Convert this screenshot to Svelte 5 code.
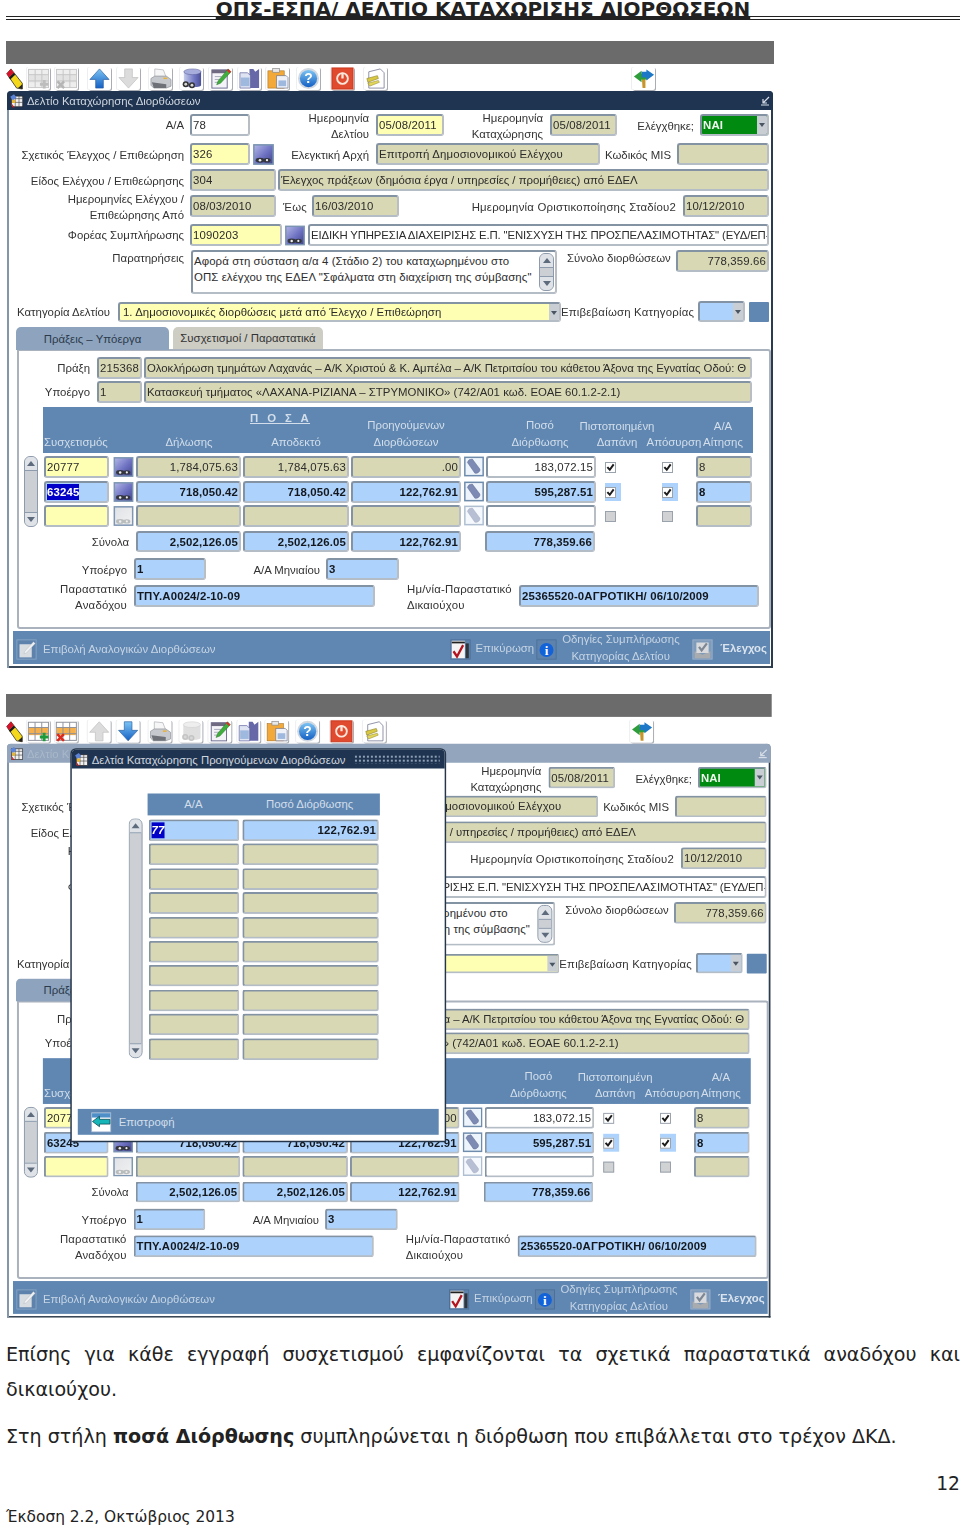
<script>
  // coordinates below are read off the first screenshot, so the helpers shift them to the canvas origin
  const OX = 7;
  const OY = 110;

  const at = (x1, y1, x2, y2) =>
    `left:${x1 - OX}px;top:${y1 - OY}px;width:${x2 - x1}px;height:${y2 - y1}px;`;
  const labelAt = (l) => {
    const left = l.a === "r" ? l.x - 300 : l.a === "c" ? l.x - 150 : l.x;
    return `left:${left - OX}px;top:${l.y - 8 - OY}px;`;
  };

  const f = (x1, y1, x2, y2, c, t = "", o = {}) => ({ x1, y1, x2, y2, c, t, ...o });
  const lb = (x, y, t, a = "r", wide = false) => ({ x, y, t, a, wide });

  const fields = [
    f(190, 114, 250, 136, "white", "78"),
    f(376, 114, 444, 136, "yel", "05/08/2011"),
    f(550, 114, 617, 136, "kha", "05/08/2011"),
    f(190, 143, 250, 165, "yel", "326"),
    f(376, 143, 600, 165, "kha", "Επιτροπή Δημοσιονομικού Ελέγχου"),
    f(677, 143, 769, 165, "kha"),
    f(190, 169, 276, 191, "kha", "304"),
    f(278, 169, 769, 191, "kha", "Έλεγχος πράξεων (δημόσια έργα / υπηρεσίες / προμήθειες) από ΕΔΕΛ", { ls: -0.02 }),
    f(190, 195, 276, 217, "kha", "08/03/2010"),
    f(312, 195, 399, 217, "kha", "16/03/2010"),
    f(683, 195, 769, 217, "kha", "10/12/2010"),
    f(190, 224, 282, 246, "yel", "1090203"),
    f(308, 224, 769, 246, "white", 'ΕΙΔΙΚΗ ΥΠΗΡΕΣΙΑ ΔΙΑΧΕΙΡΙΣΗΣ Ε.Π. "ΕΝΙΣΧΥΣΗ ΤΗΣ ΠΡΟΣΠΕΛΑΣΙΜΟΤΗΤΑΣ" (ΕΥΔ/ΕΠ-', { ls: -0.15 }),
    f(676, 250, 769, 272, "kha", "778,359.66", { right: true }),
    f(118, 302, 561, 322, "yel", "1. Δημοσιονομικές διορθώσεις μετά από Έλεγχο / Επιθεώρηση", { drop: true, pad: true, ls: 0.03 }),
    f(698, 301, 745, 322, "blue", "", { drop: true }),
    f(97, 357, 142, 379, "kha", "215368"),
    f(144, 357, 752, 379, "kha", "Ολοκλήρωση τμημάτων Λαχανάς – Α/Κ Χριστού & Κ. Αμπέλα – Α/Κ Πετριτσίου του κάθετου Άξονα της Εγνατίας Οδού: Θ", { ls: -0.05 }),
    f(97, 381, 142, 403, "kha", "1"),
    f(144, 381, 752, 403, "kha", "Κατασκευή τμήματος «ΛΑΧΑΝΑ-ΡΙΖΙΑΝΑ – ΣΤΡΥΜΟΝΙΚΟ» (742/Α01 κωδ. ΕΟΑΕ 60.1.2-2.1)", { ls: 0.02 }),
    f(136, 531, 241, 552, "blue", "2,502,126.05", { right: true, bold: true }),
    f(243, 531, 349, 552, "blue", "2,502,126.05", { right: true, bold: true }),
    f(351, 531, 461, 552, "blue", "122,762.91", { right: true, bold: true }),
    f(485, 531, 595, 552, "blue", "778,359.66", { right: true, bold: true }),
    f(134, 558, 206, 580, "blue", "1", { bold: true }),
    f(326, 558, 399, 580, "blue", "3", { bold: true }),
    f(134, 585, 375, 607, "blue", "ΤΠΥ.Α0024/2-10-09", { bold: true }),
    f(519, 585, 759, 607, "blue", "25365520-0ΑΓΡΟΤΙΚΗ/ 06/10/2009", { bold: true }),
  ];

  const labels = [
    lb(184, 125, "Α/Α"),
    lb(369, 118, "Ημερομηνία"),
    lb(369, 134, "Δελτίου"),
    lb(543, 118, "Ημερομηνία"),
    lb(543, 134, "Καταχώρησης"),
    lb(694, 126, "Ελέγχθηκε;"),
    lb(184, 155, "Σχετικός Έλεγχος / Επιθεώρηση"),
    lb(369, 155, "Ελεγκτική Αρχή"),
    lb(671, 155, "Κωδικός MIS"),
    lb(184, 181, "Είδος Ελέγχου / Επιθεώρησης"),
    lb(184, 199, "Ημερομηνίες Ελέγχου /"),
    lb(184, 215, "Επιθεώρησης Από"),
    lb(283, 207, "Έως", "l", true),
    lb(676, 207, "Ημερομηνία Οριστικοποίησης Σταδίου2", "r", true),
    lb(184, 235, "Φορέας Συμπλήρωσης"),
    lb(184, 258, "Παρατηρήσεις"),
    lb(567, 258, "Σύνολο διορθώσεων", "l"),
    lb(17, 312, "Κατηγορία Δελτίου", "l"),
    lb(561, 312, "Επιβεβαίωση Κατηγορίας", "l", true),
    lb(90, 368, "Πράξη"),
    lb(90, 392, "Υποέργο"),
    lb(129, 542, "Σύνολα"),
    lb(127, 570, "Υποέργο"),
    lb(320, 570, "Α/Α Μηνιαίου"),
    lb(127, 589, "Παραστατικό", "r", true),
    lb(127, 605, "Αναδόχου", "r", true),
    lb(407, 589, "Ημ/νία-Παραστατικό", "l", true),
    lb(407, 605, "Δικαιούχου", "l", true),
  ];

  const heads = [
    lb(44, 442, "Συσχετισμός", "l"),
    lb(189, 442, "Δήλωσης", "c"),
    lb(296, 442, "Αποδεκτό", "c"),
    lb(406, 425, "Προηγούμενων", "c"),
    lb(406, 442, "Διορθώσεων", "c"),
    lb(540, 425, "Ποσό", "c"),
    lb(540, 442, "Διόρθωσης", "c"),
    lb(617, 426, "Πιστοποιημένη", "c"),
    lb(617, 442, "Δαπάνη", "c"),
    lb(674, 442, "Απόσυρση", "c"),
    lb(723, 426, "Α/Α", "c"),
    lb(723, 442, "Αίτησης", "c"),
  ];

  const rows = [
    { y1: 456, y2: 478, a: "20777", b: "1,784,075.63", d: ".00", e: "183,072.15", n: "8", checked: true },
    { y1: 481, y2: 503, a: "63245", b: "718,050.42", d: "122,762.91", e: "595,287.51", n: "8", checked: true, cur: true },
    { y1: 505, y2: 527, a: "", b: "", d: "", e: "", n: "", checked: false },
  ];

  const modalRows = Array.from({ length: 10 }, (_, i) => Math.round(51 + i * 24.4));

  const tools = [
    { n: "pencil", w: 17, m: 0 },
    { n: "tplus", m: 4, dim: [true, false] },
    { n: "tminus", m: 5, dim: [true, false] },
    { n: "up", m: 10, dim: [false, true] },
    { n: "down", m: 6, dim: [true, false] },
    { n: "print", m: 9 },
    { n: "db", m: 8, dim: [false, true] },
    { n: "note", m: 6 },
    { n: "copy", m: 6 },
    { n: "paste", m: 5 },
    { n: "help", m: 8 },
    { n: "stop", m: 11 },
    { n: "doc", m: 10 },
    { n: "sign", m: 245 },
  ];

  const shots = [{ second: false }, { second: true }];
</script>

{#snippet icon(name, off = false)}
  <svg class="ico" viewBox="0 0 24 24" preserveAspectRatio={name === "pencil" ? "none" : undefined} aria-hidden="true">
    {#if name === "pencil"}
      <path d="M1 7 7 2 23 17 23 23 15 22Z" fill="#f4d81c" stroke="#222" stroke-width=".9" />
      <path d="M1 7 7 2 11 6 4 11Z" fill="#d8102c" />
      <path d="M4 11 11 6 13 8 6 13Z" fill="#1c1c1c" />
      <path d="M17 22 23 18 23 23Z" fill="#222" />
    {:else if name === "tplus" || name === "tminus"}
      <rect x="1.5" y="2.5" width="21" height="19" fill={off ? "#eeeeee" : "#fff"} stroke={off ? "#c6c6c6" : "#8b8f98"} />
      <rect x="2" y="8" width="20" height="8" fill={off ? "#e3e3e3" : "#f5b04c"} />
      <path d="M1.5 8h21M1.5 14.5h21M8.5 2.5v19M15.5 2.5v19" stroke={off ? "#c6c6c6" : "#8b8f98"} fill="none" />
      {#if name === "tplus"}
        <path d="M18 13.5v9M13.5 18h9" stroke={off ? "#bdbdbd" : "#1f9a3a"} stroke-width="3" />
      {:else}
        <path d="M2.5 15l7 7M9.5 15l-7 7" stroke={off ? "#b5b5b5" : "#dc2a1c"} stroke-width="2.6" />
      {/if}
    {:else if name === "up"}
      <path d="M12 2 22 13H16V22H8V13H2Z" fill={off ? "#dcdcdc" : "url(#blueV)"} stroke={off ? "#bdbdbd" : "#2a5f9e"} stroke-width=".7" />
    {:else if name === "down"}
      <path d="M12 22 22 11H16V2H8V11H2Z" fill={off ? "#dcdcdc" : "url(#blueV)"} stroke={off ? "#bdbdbd" : "#2a5f9e"} stroke-width=".7" />
    {:else if name === "print"}
      <path d="M6 2 15 3 18 11H6Z" fill="#f6f6f6" stroke="#a8acb2" stroke-width=".7" />
      <path d="M2 12 6 9.5H18L23 13V20L18 22H5L2 19Z" fill="#c6cacf" stroke="#8d9298" stroke-width=".7" />
      <path d="M3 16 18 18V22H5Z" fill="#6e7278" />
      <rect x="15" y="11" width="4" height="1.6" fill="#e8b23a" />
    {:else if name === "db"}
      <path d="M4 5V19C4 21.5 21 22 22 19V5Z" fill={off ? "#dfdfdf" : "url(#violetH)"} />
      <ellipse cx="13" cy="5" rx="9" ry="3" fill={off ? "#eeeeee" : "#a8aedc"} stroke={off ? "#c8c8c8" : "#4d5390"} stroke-width=".5" />
      <circle cx="6" cy="18" r="3.2" fill={off ? "#c4c4c4" : "#333"} /><circle cx="12.5" cy="19" r="3.2" fill={off ? "#c4c4c4" : "#333"} />
      <circle cx="6" cy="18" r="1.5" fill="#d8d8d8" /><circle cx="12.5" cy="19" r="1.5" fill="#d8d8d8" />
    {:else if name === "note"}
      <rect x="3" y="3" width="16" height="19" fill="#f4f3f8" stroke="#6b6c90" />
      <rect x="3" y="3" width="16" height="3.5" fill="#6f6a82" />
      <path d="M6 10h7M6 13h6M6 16h5" stroke="#a6a8bc" />
      <path d="M20 2 23 5 12 17 8 18.5 9.5 14.5Z" fill="#3fae3a" stroke="#26702a" stroke-width=".5" />
      <path d="M20 2 23 5 21.5 6.5 18.5 3.5Z" fill="#e02a2a" />
    {:else if name === "copy"}
      <path d="M12 2H16L18 5 22 2V22H12Z" fill="#6668a8" />
      <path d="M2 6H10L13 9V22H2Z" fill="#dfe4f2" stroke="#5c5f9a" stroke-width=".7" />
      <rect x="3" y="11" width="9" height="9" fill="#9fb8de" />
    {:else if name === "paste"}
      <rect x="2" y="4" width="17" height="18" fill="#f2a93a" stroke="#a76c18" stroke-width=".6" />
      <rect x="7" y="1.5" width="7" height="4" fill="#e8e8e8" stroke="#888" stroke-width=".7" />
      <path d="M11 9H21L23 11V22H11Z" fill="#eef2f8" stroke="#6e7188" stroke-width=".7" />
      <rect x="13" y="14" width="8" height="6" fill="#9fb8de" />
    {:else if name === "help"}
      <circle cx="12" cy="12" r="11" fill="#d2d8e0" />
      <circle cx="12" cy="12" r="9" fill="url(#blueV)" />
      <text x="12" y="17" text-anchor="middle" font-size="14.5" font-weight="700" font-family="Liberation Sans, sans-serif" fill="#fff">?</text>
    {:else if name === "stop"}
      <rect x="1" y="1" width="22" height="22" fill="#e04a2e" stroke="#c8381f" />
      <circle cx="12" cy="12" r="5.6" fill="none" stroke="#fbe6dc" stroke-width="2" />
      <path d="M12 6v6" stroke="#fbe6dc" stroke-width="2.4" />
    {:else if name === "doc"}
      <path d="M5 5 17 2 21 6V22H5Z" fill="#fff" stroke="#70748e" stroke-width=".8" />
      <path d="M3 12 14 9 15 12 4 16Z" fill="#d8c844" stroke="#8a7f24" stroke-width=".6" />
      <path d="M4 17 15 14 16 16 6 20Z" fill="#e3d65c" stroke="#8a7f24" stroke-width=".5" />
    {:else if name === "sign"}
      <path d="M10 8H14V22H11Z" fill="#c9952a" />
      <path d="M2 10 10 4V7H16V13H10V16Z" fill="#2f9e3a" />
      <path d="M23 8 15 2.5V5H10V11H15V14Z" fill="#1d78c8" />
    {:else if name === "lookup"}
      <rect x="1" y="1" width="22" height="22" fill={off ? "url(#paleH)" : "url(#violetD)"} stroke={off ? "#7f96b2" : "#7b94b2"} stroke-width="1.8" />
      <ellipse cx="8" cy="18.5" rx="5" ry="2.8" fill={off ? "#b9bcbc" : "#33363f"} /><ellipse cx="16" cy="18.5" rx="4.2" ry="2.6" fill={off ? "#b9bcbc" : "#33363f"} />
      <circle cx="8" cy="18.5" r="1.5" fill="#eeeeee" /><circle cx="16" cy="18.5" r="1.3" fill="#eeeeee" />
    {:else if name === "flash"}
      <rect x="1" y="1" width="22" height="22" fill="#eef4fb" stroke="#6f8cad" stroke-width="1.8" />
      <path d="M6 4 10 3 19 15C20 18 16 21 13 20L4 7Z" fill="#7d8bb4" stroke="#4e5a84" stroke-width=".5" />
    {:else if name === "edit"}
      <rect x="1" y="1" width="22" height="22" fill="#5d83ad" stroke="#8aa6c6" />
      <rect x="4" y="6" width="14" height="15" fill="#d8dde2" />
      <path d="M20 3 22 5 12 16 9 17 10 14Z" fill="#eef0f2" stroke="#a3aab2" stroke-width=".4" />
    {:else if name === "valid"}
      <rect x="1" y="1" width="22" height="22" fill="#5d83ad" stroke="#4c6e96" />
      <rect x="2" y="2" width="15" height="20" fill="#f4f4f4" />
      <path d="M2 4h15" stroke="#222" stroke-width="2" />
      <path d="M4 14 8 20 15 7" fill="none" stroke="#b3121e" stroke-width="2.6" />
      <rect x="18" y="5" width="3.5" height="17" fill="#30353c" />
    {:else if name === "info"}
      <rect x="1" y="1" width="22" height="22" fill="#5d83ad" stroke="#4c6e96" />
      <circle cx="12" cy="12.5" r="8" fill="#1462d8" />
      <text x="12" y="18" text-anchor="middle" font-size="15" font-weight="700" font-family="Liberation Serif, serif" fill="#fff">i</text>
    {:else if name === "check"}
      <rect x="1" y="1" width="22" height="22" fill="#7f9bbb" stroke="#9db3cc" />
      <path d="M3 14 12 18 21 14V22H3Z" fill="#a9acaf" />
      <rect x="5" y="4" width="14" height="12" fill="#d8dade" />
      <path d="M8 9 11 13 17 5" fill="none" stroke="#7d8894" stroke-width="2.6" />
    {:else if name === "back"}
      <rect x="1" y="1" width="22" height="22" fill="#fff" stroke="#9db3cc" />
      <rect x="1.5" y="1.5" width="21" height="5" fill="#4e8fc8" />
      <path d="M2 11 10 5V8.5H22V14H10V17Z" fill="#16b6b8" stroke="#0a4a54" stroke-width=".9" />
    {:else if name === "app"}
      <rect x="4" y="5" width="18" height="17" fill="#f0f0f0" stroke="#222" />
      <path d="M4 9h18M10 5v17M16 5v17M4 15h18" stroke="#444" />
      <path d="M2 6 8 2 12 7 6 12Z" fill="#5b84d8" />
      <rect x="5" y="11" width="5" height="5" fill="#e8b52c" />
      <path d="M3 15 9 23 6 23Z" fill="#c2171f" />
    {/if}
  </svg>
{/snippet}

{#snippet scrollbar(style)}
  <div class="sbar" {style}>
    <span class="sbtn top"></span>
    <span class="strack"></span>
    <span class="sbtn bot"></span>
  </div>
{/snippet}

{#snippet field(x)}
  <div
    class="field {x.c}"
    class:bold={x.bold}
    class:right={x.right}
    class:pad={x.pad}
    style={at(x.x1, x.y1, x.x2, x.y2) + (x.ls != null ? `letter-spacing:${x.ls}px;` : "")}
  >
    <span class="val">{x.t}</span>
    {#if x.drop}<span class="drop"></span>{/if}
  </div>
{/snippet}

{#snippet checkbox(x, r)}
  <div class="cbox" class:cur={r.cur} style={at(x, r.y1 + 2, r.cur ? x + 16 : x + 12, r.y2 - 2)}>
    <span class="tick" class:dis={!r.checked}>
      {#if r.checked}
        <svg viewBox="0 0 10 10" aria-hidden="true"><path d="M1.5 4.5 4.2 7.5 8.5 1.5" fill="none" stroke="#1c1c1c" stroke-width="2.2" /></svg>
      {/if}
    </span>
  </div>
{/snippet}

{#snippet formWindow(second)}
  <div class="window">
    <div class="titlebar" class:inactive={second}>
      <span class="tico">{@render icon("app")}</span>
      <span class="ttl">Δελτίο Καταχώρησης Διορθώσεων</span>
      <svg class="minim" viewBox="0 0 10 10" aria-hidden="true"><path d="M9 1 3 7M3 3v4h4M1 9h8" fill="none" stroke="#d8dee8" stroke-width="1.2" /></svg>
    </div>

    <div class="canvas">
      <div class="panel" style={at(17, 349, 771, 629)}></div>
      <div class="tab on" style={at(16, 327, 169, 350)}>Πράξεις – Υπόεργα</div>
      <div class="tab" style={at(173, 327, 323, 349)}>Συσχετισμοί / Παραστατικά</div>

      {#each labels as l}
        <div class="lbl {l.a}" class:wide={l.wide} style={labelAt(l)}>{l.t}</div>
      {/each}

      {#each fields as x}
        {@render field(x)}
      {/each}

      <!-- Ελέγχθηκε; -->
      <div class="field green bold" style={at(700, 114, 769, 136)}><span class="val">ΝΑΙ</span><span class="drop"></span></div>
      <div class="lookupico" style={at(253, 144, 274, 165)}>{@render icon("lookup")}</div>
      <div class="lookupico" style={at(285, 225, 305, 246)}>{@render icon("lookup")}</div>
      <div class="flag" style={at(749, 302, 769, 322)}></div>

      <!-- Παρατηρήσεις -->
      <div class="textarea" style={at(191, 250, 557, 294)}>
        <div class="lines">
          Αφορά στη σύσταση α/α 4 (Στάδιο 2) του καταχωρημένου στο<br />
          ΟΠΣ ελέγχου της ΕΔΕΛ "Σφάλματα στη διαχείριση της σύμβασης"
        </div>
        {@render scrollbar("right:1px;top:1px;bottom:1px;width:15px;")}
      </div>

      <!-- grid header -->
      <div class="ghead" style={at(43, 407, 753, 453)}></div>
      {#each heads as l}
        <div class="lbl head {l.a}" style={labelAt(l)}>{l.t}</div>
      {/each}
      <div class="lbl head l poso" style={labelAt({ x: 250, y: 418, a: "l" })}>Π Ο Σ Α</div>

      {@render scrollbar(at(24, 456, 38, 527))}

      {#each rows as r}
        <div class="field {r.cur ? 'blue' : 'yel'}" class:bold={r.cur} style={at(44, r.y1, 109, r.y2)}>
          <span class="val" class:sel={r.cur && !second}>{r.a}</span>
        </div>
        <div class="lookupico" style={at(113, r.y1 + 1, 134, r.y2 - 1)}>{@render icon("lookup", !r.a)}</div>
        <div class="field right {r.cur ? 'blue' : 'kha'}" class:bold={r.cur} style={at(136, r.y1, 241, r.y2)}><span class="val">{r.b}</span></div>
        <div class="field right {r.cur ? 'blue' : 'kha'}" class:bold={r.cur} style={at(243, r.y1, 349, r.y2)}><span class="val">{r.b}</span></div>
        <div class="field right {r.cur ? 'blue' : 'kha'}" class:bold={r.cur} style={at(351, r.y1, 461, r.y2)}><span class="val">{r.d}</span></div>
        <div class="lookupico" class:faded={!r.a} style={at(464, r.y1, 484, r.y2 - 1)}>{@render icon("flash")}</div>
        <div class="field right {r.cur ? 'blue' : 'white'}" class:bold={r.cur} style={at(486, r.y1, 596, r.y2)}><span class="val">{r.e}</span></div>
        {@render checkbox(605, r)}
        {@render checkbox(662, r)}
        <div class="field {r.cur ? 'blue' : 'kha'}" class:bold={r.cur} style={at(696, r.y1, 752, r.y2)}><span class="val">{r.n}</span></div>
      {/each}
    </div>

    <div class="actions">
      <span class="aico">{@render icon("edit")}</span>
      <span class="atxt first">Επιβολή Αναλογικών Διορθώσεων</span>
      <span class="aico push">{@render icon("valid")}</span>
      <span class="atxt val2">Επικύρωση</span>
      <span class="aico tight">{@render icon("info")}</span>
      <span class="atxt help">Οδηγίες Συμπλήρωσης<br />Κατηγορίας Δελτίου</span>
      <span class="aico chk">{@render icon("check")}</span>
      <span class="atxt strong">Έλεγχος</span>
    </div>
  </div>
{/snippet}

<svg class="defs" aria-hidden="true">
  <defs>
    <linearGradient id="blueV" x1="0" y1="0" x2="0" y2="1">
      <stop offset="0" stop-color="#7cc4f4" /><stop offset="1" stop-color="#1460c4" />
    </linearGradient>
    <linearGradient id="violetH" x1="0" y1="0" x2="1" y2="0">
      <stop offset="0" stop-color="#c4cdea" /><stop offset=".6" stop-color="#7278c4" /><stop offset="1" stop-color="#4a4f96" />
    </linearGradient>
    <linearGradient id="violetD" x1="0" y1="0" x2="1" y2="1">
      <stop offset="0" stop-color="#b4b8e8" /><stop offset=".55" stop-color="#6c70c0" /><stop offset="1" stop-color="#3f4488" />
    </linearGradient>
    <linearGradient id="paleH" x1="0" y1="0" x2="1" y2="1">
      <stop offset="0" stop-color="#dfe2e6" /><stop offset="1" stop-color="#f2f2f2" />
    </linearGradient>
  </defs>
</svg>

<div class="page">
  <header class="doc-title"><span>ΟΠΣ-ΕΣΠΑ/ ΔΕΛΤΙΟ ΚΑΤΑΧΩΡΙΣΗΣ ΔΙΟΡΘΩΣΕΩΝ</span></header>

  {#each shots as s}
    <section class="shot" class:second={s.second}>
      <div class="graybar"></div>
      <div class="toolbar">
        {#each tools as t}
          <span class="tool" class:bare={t.n === "pencil"} style={`margin-left:${t.m}px;${t.w ? `width:${t.w}px;` : ""}`}>
            {@render icon(t.n, t.dim ? t.dim[s.second ? 1 : 0] : false)}
          </span>
        {/each}
      </div>

      {@render formWindow(s.second)}

      {#if s.second}
        <div class="modal">
          <div class="titlebar">
            <span class="tico">{@render icon("app")}</span>
            <span class="ttl">Δελτία Καταχώρησης Προηγούμενων Διορθώσεων</span>
            <span class="dots"></span>
          </div>
          <div class="mbody">
            <div class="mhead">
              <span class="mh1">Α/Α</span>
              <span class="mh2">Ποσό Διόρθωσης</span>
            </div>
            {#each modalRows as y, i}
              <div class="field {i === 0 ? 'blue' : 'kha'}" class:bold={i === 0} style={`left:77px;top:${y}px;width:91px;height:22px;`}>
                {#if i === 0}<span class="val sel ital">77</span>{/if}
              </div>
              <div class="field right {i === 0 ? 'blue' : 'kha'}" class:bold={i === 0} style={`left:171px;top:${y}px;width:137px;height:22px;`}>
                {#if i === 0}<span class="val">122,762.91</span>{/if}
              </div>
            {/each}
            {@render scrollbar("left:57px;top:50px;width:14px;height:241px;")}
            <div class="mbar">
              <span class="aico">{@render icon("back")}</span>
              <span class="atxt">Επιστροφή</span>
            </div>
          </div>
        </div>
      {/if}
    </section>
  {/each}

  <main class="text">
    <p class="just">Επίσης για κάθε εγγραφή συσχετισμού εμφανίζονται τα σχετικά παραστατικά αναδόχου και δικαιούχου.</p>
    <p>Στη στήλη <b>ποσά Διόρθωσης</b> συμπληρώνεται η διόρθωση που επιβάλλεται στο τρέχον ΔΚΔ.</p>
  </main>
  <div class="pageno">12</div>
  <footer class="foot">Έκδοση 2.2, Οκτώβριος 2013</footer>
</div>

<style>
  :global(body) {
    margin: 0;
    background: #fff;
  }

  .defs {
    position: absolute;
    width: 0;
    height: 0;
  }

  .page {
    width: 960px;
    height: 1525px;
    overflow: hidden;
    font-family: "DejaVu Sans", sans-serif;
    color: #222;
  }

  .doc-title {
    margin-left: 6px;
    height: 16px;
    border-bottom: 4px double #222;
    text-align: center;
    font-size: 20px;
    font-weight: 700;
    line-height: 20px;
    white-space: nowrap;
    overflow: visible;
  }

  .doc-title span {
    display: inline-block;
    position: relative;
    top: -1px;
    text-decoration: underline;
  }

  .shot {
    position: relative;
    width: 768px;
    margin: 21px 0 0 6px;
    transform-origin: 0 0;
    filter: blur(0.35px);
    font-family: "Liberation Sans", Arial, sans-serif;
    font-size: 11.4px;
    color: #2c2c2c;
  }

  .shot.second {
    margin-top: 26px;
    transform: scale(0.997, 0.995);
  }

  .graybar {
    height: 23px;
    background: #6b6b6b;
  }

  .toolbar {
    display: flex;
    align-items: flex-start;
    height: 24px;
    margin-top: 3px;
  }

  .tool {
    flex: none;
    display: block;
    width: 23px;
    height: 23px;
    box-shadow:
      1px 1px 0 #a9adb3,
      -1px 0 0 #eceef1;
    border-radius: 2px;
  }

  .tool.bare {
    box-shadow: none;
  }

  .ico {
    display: block;
    width: 100%;
    height: 100%;
  }

  .window {
    position: relative;
    display: flex;
    flex-direction: column;
    width: 766px;
    height: 577px;
    margin-left: 1px;
    background: #fff;
    border-radius: 4px 4px 0 0;
    box-shadow:
      inset 2px 0 0 #8396aa,
      inset -2px 0 0 #2c3c50,
      inset 0 -2px 0 #3a4756;
  }

  .titlebar {
    flex: none;
    display: flex;
    align-items: center;
    height: 19px;
    padding: 0 2px;
    background: #1f3451;
    border-radius: 4px 4px 0 0;
    color: #ced5de;
    box-sizing: border-box;
  }

  .titlebar.inactive {
    background: #92a5bc;
    color: #a9b8ca;
  }

  .tico {
    flex: none;
    width: 15px;
    height: 15px;
    margin-right: 3px;
  }

  .ttl {
    white-space: nowrap;
  }

  .minim {
    width: 10px;
    height: 10px;
    margin-left: auto;
    margin-right: 1px;
  }

  .canvas {
    position: relative;
    flex: none;
    height: 521px;
  }

  .panel {
    position: absolute;
    box-sizing: border-box;
    border: 2px solid #a9b2bd;
    border-radius: 0 3px 3px 3px;
    background: #fff;
  }

  .tab {
    position: absolute;
    box-sizing: border-box;
    display: flex;
    align-items: center;
    justify-content: center;
    background: #cdcdc4;
    border-radius: 5px 5px 0 0;
    color: #333;
  }

  .tab.on {
    background: #8ea4be;
    color: #2b3a4c;
  }

  .lbl {
    position: absolute;
    height: 16px;
    line-height: 16px;
    display: flex;
    white-space: nowrap;
    color: #333;
  }

  .lbl.wide {
    letter-spacing: 0.2px;
  }

  .lbl.r,
  .lbl.c {
    width: 300px;
  }

  .lbl.r {
    justify-content: flex-end;
  }

  .lbl.c {
    justify-content: center;
  }

  .lbl.head {
    color: #d3deea;
  }

  .poso {
    font-weight: 700;
    text-decoration: underline;
    letter-spacing: 1.4px;
    word-spacing: 3px;
  }

  .ghead {
    position: absolute;
    background: #5f87b2;
  }

  .field {
    position: absolute;
    box-sizing: border-box;
    display: flex;
    align-items: center;
    overflow: hidden;
    padding: 0 1px;
    border: 2px solid;
    border-color: #8493a4 #b9bec4 #b4bcc6 #8493a4;
    border-radius: 3px;
    line-height: 16px;
    letter-spacing: 0.15px;
    white-space: nowrap;
  }

  .field.pad {
    padding-left: 3px;
  }

  .field.right {
    justify-content: flex-end;
  }

  .field.bold {
    font-weight: 700;
    color: #14181e;
  }

  .white {
    background: #fff;
  }

  .yel {
    background: #ffffb4;
  }

  .kha {
    background: #d8d8b4;
  }

  .blue {
    background: #add3fc;
  }

  .field.green {
    background: #008a10;
    color: #f0f6f0;
  }

  .val {
    flex: none;
  }

  .val.sel {
    background: #0000c8;
    color: #fff;
  }

  .ital {
    font-style: italic;
  }

  .drop {
    position: absolute;
    top: 0;
    right: 0;
    bottom: 0;
    width: 10px;
    background: #c9ced4;
  }

  .drop::after {
    content: "";
    position: absolute;
    top: 7px;
    left: 2px;
    border: 3px solid transparent;
    border-top: 4px solid #4a5563;
    border-bottom: 0;
  }

  .lookupico {
    position: absolute;
  }

  .lookupico.faded {
    opacity: 0.55;
  }

  .flag {
    position: absolute;
    background: #5f87b2;
    border-radius: 1px;
  }

  .textarea {
    position: absolute;
    box-sizing: border-box;
    background: #fff;
    border: 2px solid;
    border-color: #8493a4 #b9bec4 #b4bcc6 #8493a4;
    border-radius: 3px;
  }

  .lines {
    padding: 1px 1px;
    line-height: 16px;
    white-space: nowrap;
    letter-spacing: 0.1px;
  }

  .sbar {
    position: absolute;
    display: flex;
    flex-direction: column;
    box-sizing: border-box;
    border: 1px solid #8d9bac;
    border-radius: 6px;
    background: #ccd0d5;
    overflow: hidden;
  }

  .sbtn {
    flex: none;
    position: relative;
    height: 13px;
    background: #dfe3e8;
  }

  .sbtn.top {
    border-bottom: 1px solid #8d9bac;
  }

  .sbtn.bot {
    border-top: 1px solid #8d9bac;
  }

  .sbtn::after {
    content: "";
    position: absolute;
    left: 50%;
    margin-left: -4px;
    top: 4px;
    border: 4px solid transparent;
  }

  .sbtn.top::after {
    border-top: 0;
    border-bottom: 5px solid #5d6b7d;
  }

  .sbtn.bot::after {
    border-bottom: 0;
    border-top: 5px solid #5d6b7d;
  }

  .strack {
    flex: 1;
  }

  .cbox {
    position: absolute;
    display: flex;
    align-items: center;
  }

  .cbox.cur {
    background: #add3fc;
  }

  .tick {
    display: block;
    width: 11px;
    height: 11px;
    box-sizing: border-box;
    border: 1px solid #9aa2ac;
    background: #fff;
  }

  .tick.dis {
    background: #d0d2d4;
  }

  .tick svg {
    display: block;
    width: 100%;
    height: 100%;
  }

  .actions {
    flex: none;
    display: flex;
    align-items: center;
    box-sizing: border-box;
    width: 757px;
    height: 33px;
    margin-left: 6px;
    padding-left: 3px;
    background: #5f87b2;
    color: #c6d4e4;
  }

  .aico {
    flex: none;
    width: 21px;
    height: 21px;
    margin-top: 3px;
  }

  .atxt {
    white-space: nowrap;
    line-height: 17px;
  }

  .atxt.first {
    margin: 3px 0 0 6px;
  }

  .aico.push {
    margin-left: auto;
  }

  .atxt.val2 {
    margin: 2px 0 0 5px;
  }

  .aico.tight {
    margin-left: 2px;
  }

  .atxt.help {
    width: 117px;
    margin-left: 5px;
    text-align: center;
  }

  .aico.chk {
    margin-left: 13px;
  }

  .atxt.strong {
    margin: 2px 3px 0 7px;
    font-weight: 700;
    color: #dbe4ee;
  }

  .modal {
    position: absolute;
    left: 66px;
    top: 56px;
    width: 374px;
    height: 393px;
    display: flex;
    flex-direction: column;
    background: #fff;
    border-radius: 4px 4px 0 0;
    box-shadow: 0 0 0 1.5px #26364a;
  }

  .dots {
    flex: 1;
    height: 9px;
    margin: 0 3px 0 8px;
    background-image: radial-gradient(#8fa0b5 0.8px, transparent 1px);
    background-size: 4px 4px;
  }

  .mbody {
    position: relative;
    flex: 1;
  }

  .mhead {
    position: absolute;
    left: 76px;
    top: 25px;
    display: flex;
    width: 233px;
    height: 22px;
    align-items: center;
    background: #5f87b2;
    color: #d3deea;
  }

  .mh1 {
    width: 92px;
    text-align: center;
  }

  .mh2 {
    flex: 1;
    text-align: center;
  }

  .mbar {
    position: absolute;
    left: 6px;
    right: 6px;
    bottom: 6px;
    height: 26px;
    display: flex;
    align-items: center;
    gap: 7px;
    padding-left: 13px;
    background: #5f87b2;
    color: #d3deea;
  }

  .mbar .aico {
    margin-top: 0;
  }

  .text {
    font-size: 19.1px;
    line-height: 35px;
    color: #222;
    padding: 0 0 0 6px;
    margin-top: 16px;
  }

  .text p {
    margin: 0 0 12px;
  }

  .text b {
    font-weight: 700;
  }

  .just {
    text-align: justify;
  }

  .pageno {
    margin-top: 18px;
    text-align: right;
    font-size: 18.7px;
    line-height: 24px;
  }

  .foot {
    margin: 11px 0 0 6px;
    font-size: 15.4px;
    line-height: 20px;
  }
</style>
